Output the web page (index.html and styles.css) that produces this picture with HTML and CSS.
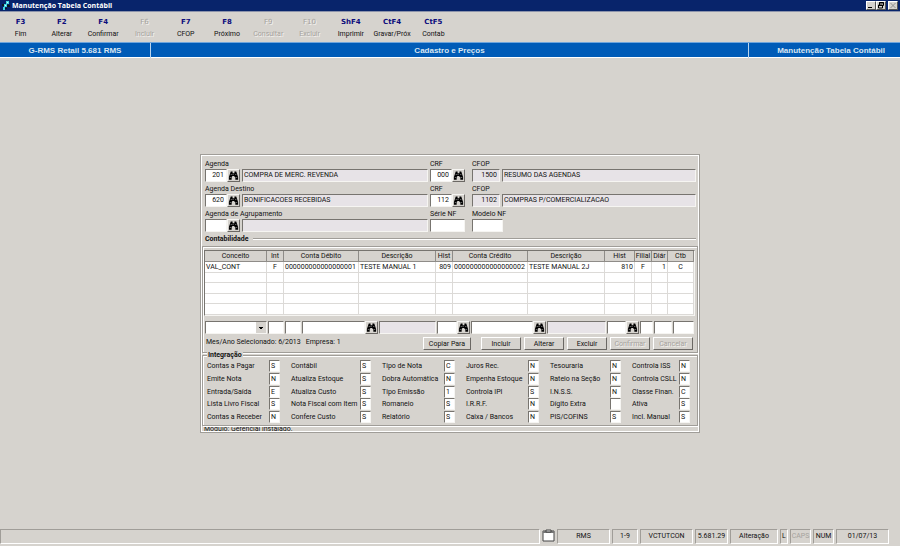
FILE: index.html
```html
<!DOCTYPE html>
<html lang="pt-BR">
<head>
<meta charset="UTF-8" />
<meta name="viewport" content="width=device-width, initial-scale=1" />
<title>Manutenção Tabela Contábil</title>
<link rel="stylesheet" href="styles.css">
</head>
<body>

<svg class="defs" aria-hidden="true">
  <symbol id="bino" viewBox="0 0 12 11">
    <path d="M3 1h2v2h2V1h2l1 3 1 3v3H8V7H7V6H5l-1 1v3H1V7l1-3z" fill="#000" />
    <path d="M3 4h1v1H3zM2 7h1v1H2zM8 4h1v1H8zM9 7h1v1H9zM5 4h1v1H5z" fill="#b0b0b0" />
  </symbol>
</svg>

<header class="titlebar">
  <svg class="logo" viewBox="0 0 10 11"><path d="M5 1h3v3H5zM3 4h3v3H3zM2 7h2v3H2z" fill="#3fd8e0" /><path d="M1 4h2v2H1zM6 5h3v2H6zM4 8h2v1H4z" fill="#101820" /><path d="M6 2h1v1H6zM4 5h1v1H4z" fill="#d8ffff" /></svg>
  <h1>Manutenção Tabela Contábil</h1>
  <div class="win-buttons">
    <button type="button" aria-label="Minimizar"><svg viewBox="0 0 8 7"><path d="M1 5h4v1H1z" fill="#000" /></svg></button>
    <button type="button" aria-label="Restaurar"><svg viewBox="0 0 8 7"><path d="M2.5 .5h4v3h-4zM1.5 3h4v3h-4zM2 1h5M1 3.5h5" fill="none" stroke="#000" /></svg></button>
    <button type="button" class="close" aria-label="Fechar" disabled><svg viewBox="0 0 8 7"><path d="M1.5 1l5 5M6.5 1l-5 5" stroke="#909090" /></svg></button>
  </div>
</header>

<nav class="toolbar">
  <button type="button"><b>F3</b>Fim</button>
  <button type="button"><b>F2</b>Alterar</button>
  <button type="button"><b>F4</b>Confirmar</button>
  <button type="button" disabled><b>F6</b>Incluir</button>
  <button type="button"><b>F7</b>CFOP</button>
  <button type="button"><b>F8</b>Próximo</button>
  <button type="button" disabled><b>F9</b>Consultar</button>
  <button type="button" disabled><b>F10</b>Excluir</button>
  <button type="button"><b>ShF4</b>Imprimir</button>
  <button type="button"><b>CtF4</b>Gravar/Próx</button>
  <button type="button"><b>CtF5</b>Contab</button>
</nav>

<div class="banner">
  <span>G-RMS Retail 5.681 RMS</span>
  <span>Cadastro e Preços</span>
  <span>Manutenção Tabela Contábil</span>
</div>

<main>
  <form class="panel">
    <div class="head">
      <label for="agenda">Agenda</label>
      <label for="crf">CRF</label>
      <label for="cfop">CFOP</label>
      <div class="lookup"><input id="agenda" value="201"><button type="button" aria-label="Buscar agenda"><svg><use href="#bino" /></svg></button></div>
      <input class="ro" aria-label="Descrição da agenda" value="COMPRA DE MERC. REVENDA" readonly>
      <div class="lookup"><input id="crf" value="000"><button type="button" aria-label="Buscar CRF"><svg><use href="#bino" /></svg></button></div>
      <input class="ro num" id="cfop" value="1500" readonly>
      <input class="ro" aria-label="Descrição do CFOP" value="RESUMO DAS AGENDAS" readonly>

      <label for="destino">Agenda Destino</label>
      <label for="crf2">CRF</label>
      <label for="cfop2">CFOP</label>
      <div class="lookup"><input id="destino" value="620"><button type="button" aria-label="Buscar agenda destino"><svg><use href="#bino" /></svg></button></div>
      <input class="ro" aria-label="Descrição da agenda destino" value="BONIFICACOES RECEBIDAS" readonly>
      <div class="lookup"><input id="crf2" value="112"><button type="button" aria-label="Buscar CRF destino"><svg><use href="#bino" /></svg></button></div>
      <input class="ro num" id="cfop2" value="1102" readonly>
      <input class="ro" aria-label="Descrição do CFOP destino" value="COMPRAS P/COMERCIALIZACAO" readonly>

      <label for="agrup">Agenda de Agrupamento</label>
      <label for="serie">Série NF</label>
      <label for="modelo">Modelo NF</label>
      <div class="lookup"><input id="agrup"><button type="button" aria-label="Buscar agrupamento"><svg><use href="#bino" /></svg></button></div>
      <input class="ro" aria-label="Descrição do agrupamento" readonly>
      <input id="serie">
      <input class="modelo" id="modelo">
    </div>

    <h2>Contabilidade</h2>

    <section class="box">
      <table>
        <colgroup>
          <col class="c-conceito"><col class="c-int"><col class="c-conta"><col class="c-desc"><col class="c-int">
          <col class="c-conta"><col class="c-desc"><col class="c-hist"><col class="c-int"><col class="c-diar"><col>
        </colgroup>
        <thead>
          <tr><th>Conceito</th><th>Int</th><th>Conta Débito</th><th>Descrição</th><th>Hist</th><th>Conta Crédito</th><th>Descrição</th><th>Hist</th><th>Filial</th><th>Diár</th><th>Ctb</th></tr>
        </thead>
        <tbody>
          <tr><td>VAL_CONT</td><td class="mid">F</td><td>000000000000000001</td><td>TESTE MANUAL 1</td><td class="num">809</td><td>000000000000000002</td><td>TESTE MANUAL 2J</td><td class="num">810</td><td class="mid">F</td><td class="num">1</td><td class="mid">C</td></tr>
          <tr><td></td><td></td><td></td><td></td><td></td><td></td><td></td><td></td><td></td><td></td><td></td></tr>
          <tr><td></td><td></td><td></td><td></td><td></td><td></td><td></td><td></td><td></td><td></td><td></td></tr>
          <tr><td></td><td></td><td></td><td></td><td></td><td></td><td></td><td></td><td></td><td></td><td></td></tr>
          <tr><td></td><td></td><td></td><td></td><td></td><td></td><td></td><td></td><td></td><td></td><td></td></tr>
        </tbody>
      </table>

      <div class="edit">
        <select aria-label="Conceito"><option></option></select>
        <input aria-label="Int">
        <input aria-label="Int 2">
        <div class="lookup"><input aria-label="Conta débito"><button type="button" aria-label="Buscar conta débito"><svg><use href="#bino" /></svg></button></div>
        <input class="ro" aria-label="Descrição débito" readonly>
        <div class="lookup"><input aria-label="Hist débito"><button type="button" aria-label="Buscar hist débito"><svg><use href="#bino" /></svg></button></div>
        <div class="lookup"><input aria-label="Conta crédito"><button type="button" aria-label="Buscar conta crédito"><svg><use href="#bino" /></svg></button></div>
        <input class="ro" aria-label="Descrição crédito" readonly>
        <div class="lookup"><input aria-label="Hist crédito"><button type="button" aria-label="Buscar hist crédito"><svg><use href="#bino" /></svg></button></div>
        <input aria-label="Filial">
        <input aria-label="Diár">
        <input aria-label="Ctb">
      </div>

      <div class="actions">
        <span>Mes/Ano Selecionado: 6/2013</span>
        <span>Empresa: 1</span>
        <button type="button" class="copy">Copiar Para</button>
        <button type="button">Incluir</button>
        <button type="button">Alterar</button>
        <button type="button">Excluir</button>
        <button type="button" disabled>Confirmar</button>
        <button type="button" disabled>Cancelar</button>
      </div>
    </section>

    <fieldset>
      <legend>Integração</legend>
      <div class="integ">
        <div>
          <label>Contas a Pagar<input value="S"></label>
          <label>Emite Nota<input value="N"></label>
          <label>Entrada/Saída<input value="E"></label>
          <label>Lista Livro Fiscal<input value="S"></label>
          <label>Contas a Receber<input value="N"></label>
        </div>
        <div>
          <label>Contábil<input value="S"></label>
          <label>Atualiza Estoque<input value="S"></label>
          <label>Atualiza Custo<input value="S"></label>
          <label>Nota Fiscal com Item<input value="S"></label>
          <label>Confere Custo<input value="S"></label>
        </div>
        <div>
          <label>Tipo de Nota<input value="C"></label>
          <label>Dobra Automática<input value="N"></label>
          <label>Tipo Emissão<input value="1"></label>
          <label>Romaneio<input value="S"></label>
          <label>Relatório<input value="S"></label>
        </div>
        <div>
          <label>Juros Rec.<input value="N"></label>
          <label>Empenha Estoque<input value="N"></label>
          <label>Controla IPI<input value="S"></label>
          <label>I.R.R.F.<input value="N"></label>
          <label>Caixa / Bancos<input value="N"></label>
        </div>
        <div>
          <label>Tesouraria<input value="N"></label>
          <label>Rateio na Seção<input value="N"></label>
          <label>I.N.S.S.<input value="N"></label>
          <label>Dígito Extra<input value=""></label>
          <label>PIS/COFINS<input value="S"></label>
        </div>
        <div>
          <label>Controla ISS<input value="N"></label>
          <label>Controla CSLL<input value="N"></label>
          <label>Classe Finan.<input value="C"></label>
          <label>Ativa<input value="S"></label>
          <label>Incl. Manual<input value="S"></label>
        </div>
      </div>
    </fieldset>
    <p class="note">Módulo: Gerencial instalado.</p>
  </form>
</main>

<footer class="status">
  <span class="msg"></span>
  <span class="clip"><svg viewBox="0 0 13 13"><path d="M1 2h11v10H1z" fill="#fff" stroke="#444" /><path d="M1 2h11v2H1z" fill="#777" /><path d="M4 3V1h5v2z" fill="#ddd" stroke="#444" /></svg></span>
  <span class="w-l">RMS</span>
  <span class="w-s">1-9</span>
  <span class="w-l">VCTUTCON</span>
  <span class="w-m">5.681.29</span>
  <span class="w-x">Alteração</span>
  <span class="w-t">L</span>
  <span class="w-c off">CAPS</span>
  <span class="w-c">NUM</span>
  <span class="w-l">01/07/13</span>
</footer>

</body>
</html>
```
FILE: styles.css
```css
* { box-sizing: border-box; }
body {
  margin: 0; min-height: 100vh; display: flex; flex-direction: column;
  background: #d6d3ce; color: #111; font: 7px/10px Roboto, "Liberation Sans", sans-serif;
}
button, input, select { font: inherit; color: inherit; margin: 0; padding: 0; border-radius: 0; min-width: 0; }
.defs { position: absolute; width: 0; height: 0; }

/* Title bar */
.titlebar { display: flex; align-items: center; height: 12px; padding: 0 2px 0 1px; background: #08246b; border-bottom: 1px solid #8c93ab; }
.logo { width: 10px; height: 11px; }
.titlebar h1 { flex: 1; margin: 0 0 0 1px; color: #fff; font: bold 7px/11px "Open Sans", sans-serif; }
.win-buttons { display: flex; }
.win-buttons button { width: 10px; height: 9px; border: 1px solid #fff; border-right-color: #555; border-bottom-color: #555; background: #d6d3ce; }
.win-buttons svg { display: block; width: 8px; height: 7px; }
.win-buttons .close { margin-left: 2px; }

/* Toolbar */
.toolbar { display: grid; grid-template-columns: repeat(11, 1fr); width: 454px; height: 30px; padding: 4px 0 2px; }
.toolbar button { border: 0; background: none; line-height: 12px; white-space: nowrap; }
.toolbar b { display: block; color: #0c0c7c; font-family: "DejaVu Sans", sans-serif; }
.toolbar button:disabled, .toolbar button:disabled b { color: #a5a29d; text-shadow: 1px 1px #f4f2ee; }
.toolbar button:disabled b { font-weight: normal; }

.banner { display: grid; grid-template-columns: 150px 1fr 152px; height: 16px; background: #005bb7; border-top: 1px solid #6fa5dc; border-bottom: 1px solid #fff; }
.banner span { color: #d9e6f2; font: bold 8px/15px "Liberation Sans", Arial, sans-serif; text-align: center; }
.banner span + span { border-left: 1px solid #b9d4ee; }
.banner span:last-child { text-align: right; padding-right: 15px; }

/* Form */
main { flex: 1; padding-top: 96px; }
.panel {
  width: 500px; max-width: 100%; margin: 0 auto; padding: 2px 1px 0;
  border: 1px solid #a09d98; box-shadow: inset 1px 1px #fff, inset -1px -1px #fff;
}
input, select, .lookup button {
  height: 13px; border: 1px solid #77746f; border-right-color: #f6f5f2; border-bottom-color: #f6f5f2; background: #fff;
}
input { width: 100%; padding: 0 1px; }
input.ro { background: #e7e3e7; }
input.num, .head .lookup input { text-align: right; padding-right: 2px; }
.lookup { display: flex; }
.lookup input { flex: 1; }
.lookup button { width: 13px; flex: none; border-color: #f6f5f2 #6b6864 #6b6864 #f6f5f2; background: #d6d3ce; }
.lookup svg { display: block; width: 11px; height: 11px; }

.head { display: grid; grid-template-columns: 35px 186px 35px 33px 1fr; column-gap: 2px; grid-auto-rows: 12px 13px; padding: 0 2px 0 3px; }
.head label { line-height: 14px; white-space: nowrap; grid-column: span 2; }
.head label:nth-of-type(3n + 2) { grid-column: span 1; }
.head > :nth-child(8n + 3), .head > :nth-child(8n + 7) { margin-left: 5px; }
.head input { padding-bottom: 1px; }
.head input.num { width: 28px; }
.head .modelo { width: 31px; }

h2 { display: flex; align-items: center; gap: 5px; height: 14px; margin: 0 2px 0 3px; font-size: 7px; line-height: 14px; }
h2::after { content: ""; flex: 1; border-top: 1px solid #a09d98; border-bottom: 1px solid #fff; }

.box, fieldset { border: 1px solid #a09d98; box-shadow: inset 1px 1px #fff, 1px 1px #fff; }
.box { height: 107px; padding: 3px 2px 0 1px; }
table { width: 100%; table-layout: fixed; border-collapse: separate; border-spacing: 0; background: #fff; border: 1px solid #77746f; border-right-color: #f6f5f2; border-bottom-color: #f6f5f2; }
.c-conceito { width: 62px; }
.c-int { width: 17px; }
.c-conta { width: 75px; }
.c-desc { width: 77px; }
.c-hist { width: 30px; }
.c-diar { width: 16px; }
th, td { height: 11px; padding: 0 1px; border-right: 1px solid #dcdad7; border-bottom: 1px solid #dcdad7; line-height: 9px; text-align: left; white-space: nowrap; }
th { padding: 0; background: #d6d3ce; border-color: #8f8c88; font-weight: normal; text-align: center; }
tbody tr:nth-child(even) td { height: 10px; }
td.num { text-align: right; }
td.mid { text-align: center; }

.edit { display: grid; grid-template-columns: 62px 16px 16px 76px 57px 33px 75px 59px 32px 13px 18px 1fr; margin: 5px 1px 3px; column-gap: 1px; }
.edit select {
  width: 100%; appearance: none;
  background:
    conic-gradient(from -45deg at 50% 100%, #000 90deg, #0000 0) right 3px top 5px / 4px 2px no-repeat,
    linear-gradient(#d6d3ce, #d6d3ce) right / 10px 100% no-repeat, #fff;
}

.actions { display: flex; gap: 3px; padding: 0 2px; white-space: nowrap; }
.actions span + span { margin-left: 2px; flex: 1; }
.actions button { width: 40px; height: 13px; border: 1px solid #fff; border-right-color: #6b6864; border-bottom-color: #6b6864; background: #d6d3ce; line-height: 10px; }
.actions .copy { width: 48px; margin-right: 7px; }
.actions button:disabled { color: #a5a29d; text-shadow: 1px 1px #f4f2ee; }

fieldset { position: relative; margin: 2px 0 0; padding: 4px 4px 2px; min-width: 0; }
legend { position: absolute; top: -6px; left: 4px; padding: 0 1px; background: #d6d3ce; font-weight: bold; }
.integ { display: flex; gap: 11px; height: 63px; }
.integ > div { display: flex; flex-direction: column; justify-content: space-between; width: 73px; }
.integ > div:nth-child(2) { width: 80px; }
.integ > div:nth-child(5) { width: 71px; }
.integ > div:nth-child(6) { width: 58px; }
.integ label { display: flex; justify-content: space-between; align-items: center; white-space: nowrap; }
.integ input { width: 11px; height: 12px; }
.note { height: 6px; margin: 0 0 0 2px; overflow: hidden; line-height: 6px; }

/* Status bar */
.status { display: flex; gap: 2px; height: 17px; padding: 0 11px 2px 0; }
.status span { height: 15px; border: 1px solid #a09d98; border-right-color: #fff; border-bottom-color: #fff; line-height: 13px; text-align: center; }
.status .msg { flex: 1; }
.status .clip { width: 13px; border: 0; }
.clip svg { display: block; width: 13px; height: 13px; }
.w-l { width: 53px; }
.w-s { width: 26px; }
.w-m { width: 33px; }
.w-x { width: 48px; }
.w-t { width: 8px; }
.w-c { width: 21px; }
.status .off { color: #a5a29d; }
```
